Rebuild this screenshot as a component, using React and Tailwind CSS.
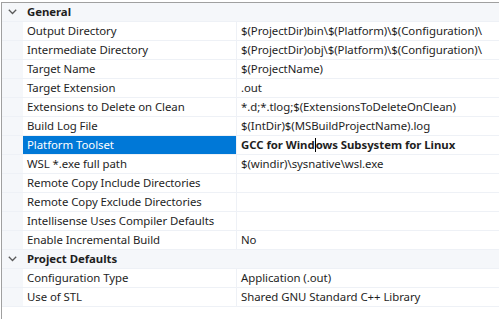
import React from 'react';

const sections = [
  {
    title: 'General',
    rows: [
      ['Output Directory', '$(ProjectDir)bin\\$(Platform)\\$(Configuration)\\'],
      ['Intermediate Directory', '$(ProjectDir)obj\\$(Platform)\\$(Configuration)\\'],
      ['Target Name', '$(ProjectName)'],
      ['Target Extension', '.out'],
      ['Extensions to Delete on Clean', '*.d;*.tlog;$(ExtensionsToDeleteOnClean)'],
      ['Build Log File', '$(IntDir)$(MSBuildProjectName).log'],
      ['Platform Toolset', 'GCC for Windows Subsystem for Linux', true],
      ['WSL *.exe full path', '$(windir)\\sysnative\\wsl.exe'],
      ['Remote Copy Include Directories', ''],
      ['Remote Copy Exclude Directories', ''],
      ['Intellisense Uses Compiler Defaults', ''],
      ['Enable Incremental Build', 'No'],
    ],
  },
  {
    title: 'Project Defaults',
    rows: [
      ['Configuration Type', 'Application (.out)'],
      ['Use of STL', 'Shared GNU Standard C++ Library'],
    ],
  },
];

const Chevron = () => (
  <svg width="9" height="6" viewBox="0 0 9 6" className="text-[#5a5a5a]">
    <path d="M0.8 0.8 L4.5 4.5 L8.2 0.8" fill="none" stroke="currentColor" strokeWidth="1.3" />
  </svg>
);

const ToolsetValue = () => (
  <span className="font-bold">
    GCC for Wind
    <span className="inline-block w-px h-[14px] bg-black align-[-3px]" />
    ows Subsystem for Linux
  </span>
);

const Row = ({ label, value, selected }) => (
  <div className="flex h-[19px] border-b border-[#eef1f6]">
    <div className="w-[21px] bg-[#f5f7fa] shrink-0" />
    <div
      className={`w-[214px] shrink-0 pl-[4px] leading-[18px] border-r border-[#eef1f6] ${
        selected ? 'bg-[#0078d7] text-white' : 'text-[#1e1e1e]'
      }`}
    >
      {label}
    </div>
    <div className="flex-1 pl-[4px] leading-[18px] text-[#1e1e1e] whitespace-nowrap overflow-hidden">
      {selected ? <ToolsetValue /> : value}
    </div>
  </div>
);

const App = () => {
  return (
    <div
      className="w-[499px] h-[319px] bg-white pt-[2px] pl-px overflow-hidden text-[11.4px] tracking-[-0.05px]"
      style={{ fontFamily: '"Noto Sans", "Open Sans", sans-serif' }}
    >
      <div className="h-full border-t border-l border-[#a0a0a0]">
        {sections.map((section) => (
          <div key={section.title}>
            <div className="flex h-[19px] bg-[#f5f7fa] border-b border-[#eef1f6]">
              <div className="w-[21px] flex items-center justify-center">
                <Chevron />
              </div>
              <div className="pl-[4px] leading-[18px] font-bold text-[#1e1e1e]">{section.title}</div>
            </div>
            {section.rows.map(([label, value, selected]) => (
              <Row key={label} label={label} value={value} selected={selected} />
            ))}
          </div>
        ))}
      </div>
    </div>
  );
};

export default App;
